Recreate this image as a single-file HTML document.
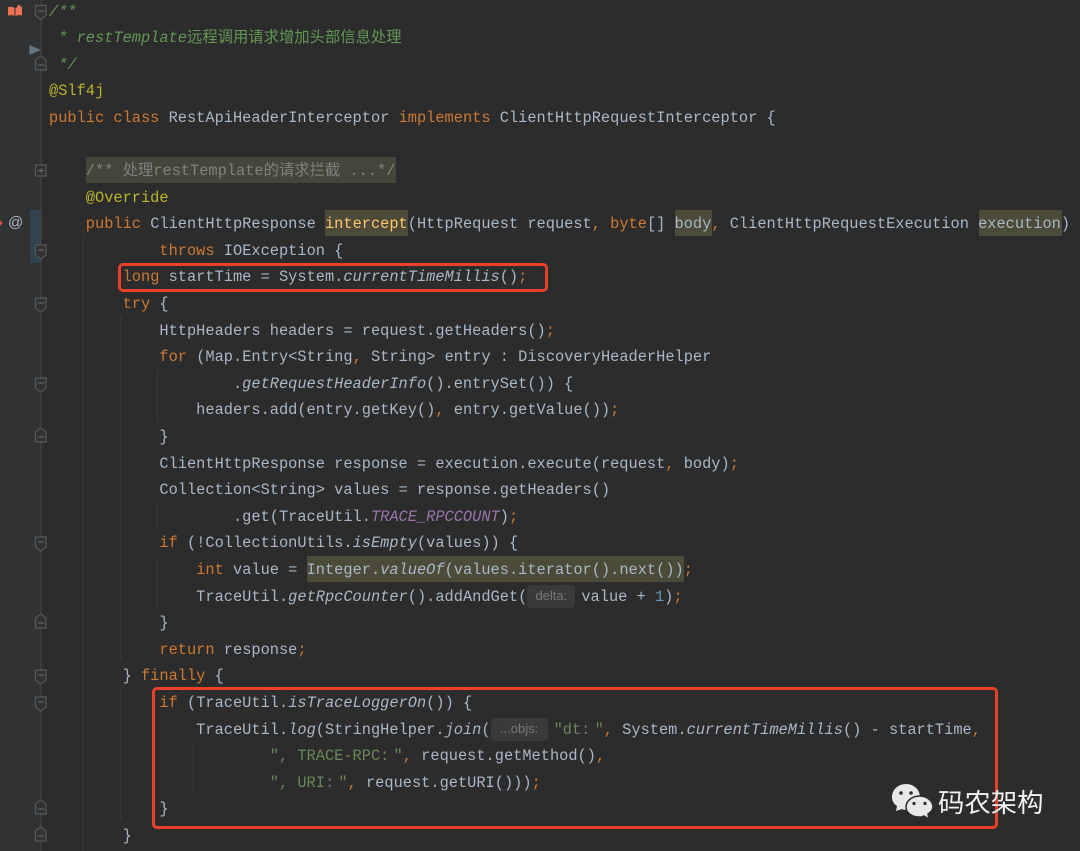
<!DOCTYPE html>
<html><head><meta charset="utf-8"><style>
html,body{margin:0;padding:0;background:#2c2c2c}
#p{position:relative;width:1080px;height:851px;overflow:hidden;background:#2c2c2c;font-family:"Liberation Mono","Noto Sans CJK SC",monospace;font-size:15.33px;color:#a9b7c6}
#g{position:absolute;left:0;top:0;width:41px;height:851px;background:#303234}
.a{position:absolute}
.hl{position:absolute;background:#4c4b3a;height:26px}
.guide{position:absolute;width:1px;background:#383838}
#c{position:absolute;left:0;top:0;width:1080px;height:851px;filter:blur(.3px)}
.l{position:absolute;left:49px;height:26px;line-height:26px;margin-top:1px;white-space:pre;font-variant-ligatures:none}
.k{color:#cc7832}.y{color:#ffc66d}.an{color:#bbb529}.d{color:#629755;font-style:italic}
.cm{color:#808080}.s{color:#6a8759}.n{color:#6897bb}.i{font-style:italic}.tc{color:#9876aa;font-style:italic}
.co{letter-spacing:-5px}
.h{display:inline-block;box-sizing:border-box;background:#3a3a3a;color:#787878;font:13px/22px "Liberation Sans",sans-serif;height:23px;border-radius:4px;text-align:center;vertical-align:top;margin-top:1px}
.box{position:absolute;box-sizing:border-box;border:3px solid #e8402a;border-radius:5px}
#wm{position:absolute;left:938px;top:785px;font:26.400px/36px "Liberation Sans","Noto Sans CJK SC",sans-serif;color:#f0f0f0;white-space:pre}
</style></head><body><div id="p">
<div id="g"></div>
<div class="a" style="left:30px;top:210px;width:11px;height:53px;background:#2f4450"></div>
<div class="guide" style="left:83px;top:236px;height:615px"></div>
<div class="guide" style="left:120px;top:316px;height:345px"></div>
<div class="guide" style="left:120px;top:689px;height:131px"></div>
<div class="guide" style="left:157px;top:370px;height:52px"></div>
<div class="guide" style="left:157px;top:503px;height:26px"></div>
<div class="guide" style="left:157px;top:556px;height:53px"></div>
<div class="guide" style="left:193px;top:742px;height:53px"></div>
<div class="hl" style="left:86px;top:157px;width:310px;background:#45453a"></div>
<div class="hl" style="left:325px;top:210px;width:83px"></div>
<div class="hl" style="left:675px;top:210px;width:37px"></div>
<div class="hl" style="left:979px;top:210px;width:83px"></div>
<div class="hl" style="left:307px;top:556px;width:377px"></div>
<svg class="a" style="left:0;top:0" width="60" height="851" viewBox="0 0 60 851" fill="none">
<path d="M41 0V851" stroke="#45484a" stroke-width="1"/>
<g stroke="#55585a" stroke-width="1.2" fill="#303234">
<path d="M35.5 5.5H46V15.5L40.750 19.5L35.500 15.500Z"/>
<path d="M35.5 70H46V60L40.750 56L35.500 60Z"/>
<path d="M35.500 165H46V176H35.500Z"/>
<path d="M35.500 245H46V255L40.750 259L35.500 255Z"/>
<path d="M35.500 298H46V308L40.750 312L35.500 308Z"/>
<path d="M35.500 378H46V388L40.750 392L35.500 388Z"/>
<path d="M35.500 442H46V432L40.750 428L35.500 432Z"/>
<path d="M35.500 537H46V547L40.750 551L35.500 547Z"/>
<path d="M35.500 628H46V618L40.750 614L35.500 618Z"/>
<path d="M35.500 670H46V680L40.750 684L35.500 680Z"/>
<path d="M35.500 697H46V707L40.750 711L35.500 707Z"/>
<path d="M35.500 814H46V804L40.750 800L35.500 804Z"/>
<path d="M35.500 841H46V831L40.750 827L35.500 831Z"/>
</g>
<g stroke="#6a6d6f" stroke-width="1">
<path d="M38 11H44M38 65H44M38 170.500H44M41 168V173M38 250H44M38 303H44M38 383H44M38 437H44M38 542H44M38 623H44M38 675H44M38 702H44M38 809H44M38 836H44"/>
</g>
<path d="M29.500 45L41 50L29.500 55Z" fill="#667584"/>
<path d="M8 7C10.500 6.500 12.500 6.500 14.500 8V16C12.500 15 10.500 15 8 15.500Z" fill="#f0714f"/>
<path d="M15.500 8L17.500 7V5H20V6.500H22V15.500C19.500 15 17.500 15 15.500 16Z" fill="#f0714f"/>
<path d="M0 220L2.500 223L0 226Z" fill="#d9583f"/>
</svg>
<div id="c">
<div class="l d" style="top:-2px">/**</div>
<div class="l d" style="top:24px"> * restTemplate<span style="font-style:normal">远程调用请求增加头部信息处理</span></div>
<div class="l d" style="top:51px"> */</div>
<div class="l an" style="top:77px">@Slf4j</div>
<div class="l" style="top:104px"><span class="k">public class</span> RestApiHeaderInterceptor <span class="k">implements</span> ClientHttpRequestInterceptor {</div>
<div class="l cm" style="top:157px">    /** 处理restTemplate的请求拦截 ...*/</div>
<div class="l an" style="top:184px">    @Override</div>
<div class="l" style="top:210px">    <span class="k">public</span> ClientHttpResponse <span class="y">intercept</span>(HttpRequest request<span class="k">,</span> <span class="k">byte</span>[] body<span class="k">,</span> ClientHttpRequestExecution execution)</div>
<div class="l" style="top:237px">            <span class="k">throws</span> IOException {</div>
<div class="l" style="top:263px">        <span class="k">long</span> startTime = System.<span class="i">currentTimeMillis</span>()<span class="k">;</span></div>
<div class="l" style="top:290px">        <span class="k">try</span> {</div>
<div class="l" style="top:317px">            HttpHeaders headers = request.getHeaders()<span class="k">;</span></div>
<div class="l" style="top:343px">            <span class="k">for</span> (Map.Entry&lt;String<span class="k">,</span> String&gt; entry : DiscoveryHeaderHelper</div>
<div class="l" style="top:370px">                    .<span class="i">getRequestHeaderInfo</span>().entrySet()) {</div>
<div class="l" style="top:396px">                headers.add(entry.getKey()<span class="k">,</span> entry.getValue())<span class="k">;</span></div>
<div class="l" style="top:423px">            }</div>
<div class="l" style="top:450px">            ClientHttpResponse response = execution.execute(request<span class="k">,</span> body)<span class="k">;</span></div>
<div class="l" style="top:476px">            Collection&lt;String&gt; values = response.getHeaders()</div>
<div class="l" style="top:503px">                    .get(TraceUtil.<span class="tc">TRACE_RPCCOUNT</span>)<span class="k">;</span></div>
<div class="l" style="top:529px">            <span class="k">if</span> (!CollectionUtils.<span class="i">isEmpty</span>(values)) {</div>
<div class="l" style="top:556px">                <span class="k">int</span> value = Integer.<span class="i">valueOf</span>(values.iterator().next())<span class="k">;</span></div>
<div class="l" style="top:583px">                TraceUtil.<span class="i">getRpcCounter</span>().addAndGet(<span class="h" style="width:48px;margin-right:6px">delta:</span>value + <span class="n">1</span>)<span class="k">;</span></div>
<div class="l" style="top:609px">            }</div>
<div class="l" style="top:636px">            <span class="k">return</span> response<span class="k">;</span></div>
<div class="l" style="top:662px">        } <span class="k">finally</span> {</div>
<div class="l" style="top:689px">            <span class="k">if</span> (TraceUtil.<span class="i">isTraceLoggerOn</span>()) {</div>
<div class="l" style="top:716px">                TraceUtil.<span class="i">log</span>(StringHelper.<span class="i">join</span>(<span class="h" style="width:57px;margin-right:6px">...objs:</span><span class="s">"dt<span class="co">:</span> "</span><span class="k">,</span> System.<span class="i">currentTimeMillis</span>() - startTime<span class="k">,</span></div>
<div class="l" style="top:742px">                        <span class="s">", TRACE-RPC<span class="co">:</span> "</span><span class="k">,</span> request.getMethod()<span class="k">,</span></div>
<div class="l" style="top:769px">                        <span class="s">", URI<span class="co">:</span> "</span><span class="k">,</span> request.getURI()))<span class="k">;</span></div>
<div class="l" style="top:795px">            }</div>
<div class="l" style="top:822px">        }</div>
</div>
<div class="box" style="left:118px;top:263px;width:430px;height:29px"></div>
<div class="box" style="left:152px;top:687px;width:846px;height:142px"></div>
<svg class="a" style="left:885px;top:778px" width="54" height="46" viewBox="885 778 54 46">
<path d="M906 784C898 784 892 790 892 797C892 801 894 804 897 806L896 811L902 809C904 810 906 810 908 810C916 810 920 804 920 797C920 790 914 784 906 784Z" fill="#e8e8e8"/>
<ellipse cx="901" cy="793" rx="1.800" ry="1.800" fill="#2c2c2c"/>
<ellipse cx="911" cy="793" rx="1.800" ry="1.800" fill="#2c2c2c"/>
<path d="M919.500 796C912 796 906 801 906 807C906 813 912 817 919.500 817C921 817 922.500 817 924 816L929 819L928 814C931 812 933 810 933 807C933 801 927 796 919.500 796Z" fill="#e8e8e8" stroke="#2c2c2c" stroke-width="1.500"/>
<ellipse cx="914" cy="803.500" rx="1.600" ry="1.600" fill="#2c2c2c"/>
<ellipse cx="925" cy="803.500" rx="1.600" ry="1.600" fill="#2c2c2c"/>
</svg>
<div id="wm">码农架构</div>
<div class="a" style="left:8px;top:212px;font:15px/22px 'Liberation Sans',sans-serif;color:#a9b7c6">@</div>
</div></body></html>
